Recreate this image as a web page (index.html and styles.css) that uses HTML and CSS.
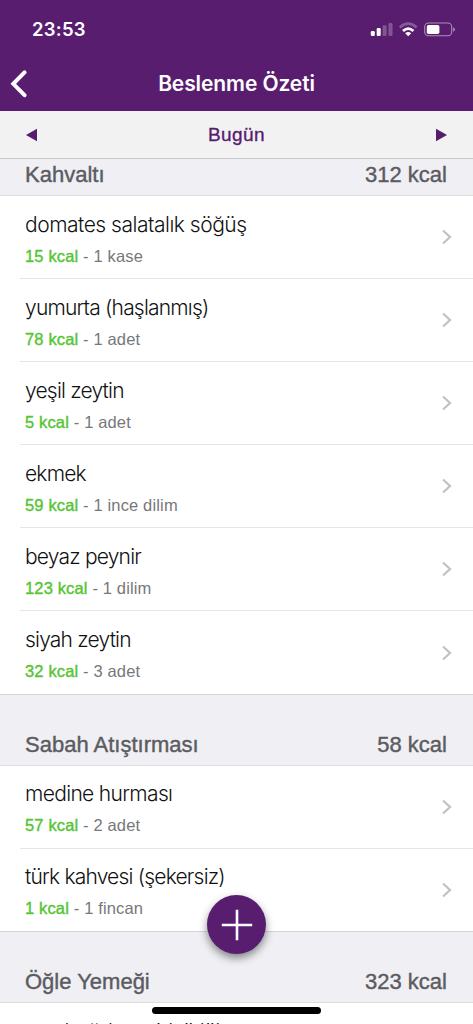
FILE: index.html
```html
<!DOCTYPE html>
<html lang="tr">
<head>
<meta charset="utf-8">
<title>Beslenme Özeti</title>
<link rel="stylesheet" href="styles.css">
</head>
<body>
<svg class="defs"><symbol id="chev" viewBox="0 0 12 16"><path d="M2 1.5 9 8 2 14.5" fill="none" stroke="#c3c3c7" stroke-width="2.3"/></symbol></svg>
<div class="screen">
  <header class="top">
    <div class="status">
      <span class="time">23:53</span>
      <svg class="indicators" width="86" height="16" viewBox="0 0 86 16">
        <g fill="#fff"><rect x=".8" y="9" width="4" height="5" rx="1.2"/><rect x="6.7" y="6" width="4" height="8" rx="1.2"/></g>
        <g fill="#fff" opacity=".25"><rect x="12.6" y="3.3" width="4" height="10.7" rx="1.2"/><rect x="18.5" y="1" width="4" height="13" rx="1.2"/></g>
        <g fill="none" stroke="#fff" stroke-width="2.7"><path d="M29.8 5.4Q38.2-2 46.6 5.4" opacity=".28"/><path d="M33 9Q38.2 4.3 43.4 9"/></g>
        <path d="M35.2 11.2Q38.2 8.9 41.2 11.2L38.2 14.2Z" fill="#fff"/>
        <rect x="54.7" y="1" width="27" height="12.8" rx="3.8" fill="none" stroke="#fff" stroke-opacity=".5" stroke-width="1.1"/>
        <rect x="56.8" y="3" width="12.6" height="9" rx="1.8" fill="#fff"/>
        <path d="M83.2 5.2Q85 6 85 7.5T83.2 9.8Z" fill="#fff" opacity=".5"/>
      </svg>
    </div>
    <div class="nav">
      <svg class="back" width="18" height="28" viewBox="0 0 18 28"><path d="M14.5 2.4 3.3 13.8 14.5 25.2" fill="none" stroke="#fff" stroke-width="4" stroke-linecap="round" stroke-linejoin="miter"/></svg>
      <h1 class="title">Beslenme Özeti</h1>
      <span></span>
    </div>
  </header>
  <nav class="days">
    <svg width="12" height="14" viewBox="0 0 12 14"><path d="M0 7 11 .8V13.2Z" fill="#571c6e"/></svg>
    <span class="day">Bugün</span>
    <svg width="12" height="14" viewBox="0 0 12 14"><path d="M12 7 1 .8V13.2Z" fill="#571c6e"/></svg>
  </nav>
  <main>
    <section>
      <h2 class="meal first"><span>Kahvaltı</span><span>312 kcal</span></h2>
      <ul class="foods">
        <li><div><p class="name wide">domates salatalık söğüş</p><p class="info"><b>15 kcal</b> - 1 kase</p></div><svg class="chev"><use href="#chev"/></svg></li>
        <li><div><p class="name">yumurta (haşlanmış)</p><p class="info"><b>78 kcal</b> - 1 adet</p></div><svg class="chev"><use href="#chev"/></svg></li>
        <li><div><p class="name">yeşil zeytin</p><p class="info"><b>5 kcal</b> - 1 adet</p></div><svg class="chev"><use href="#chev"/></svg></li>
        <li><div><p class="name">ekmek</p><p class="info"><b>59 kcal</b> - 1 ince dilim</p></div><svg class="chev"><use href="#chev"/></svg></li>
        <li><div><p class="name">beyaz peynir</p><p class="info"><b>123 kcal</b> - 1 dilim</p></div><svg class="chev"><use href="#chev"/></svg></li>
        <li><div><p class="name">siyah zeytin</p><p class="info"><b>32 kcal</b> - 3 adet</p></div><svg class="chev"><use href="#chev"/></svg></li>
      </ul>
    </section>
    <section>
      <h2 class="meal"><span>Sabah Atıştırması</span><span>58 kcal</span></h2>
      <ul class="foods short">
        <li><div><p class="name mid">medine hurması</p><p class="info"><b>57 kcal</b> - 2 adet</p></div><svg class="chev"><use href="#chev"/></svg></li>
        <li><div><p class="name">türk kahvesi (şekersiz)</p><p class="info"><b>1 kcal</b> - 1 fincan</p></div><svg class="chev"><use href="#chev"/></svg></li>
      </ul>
    </section>
    <section>
      <h2 class="meal"><span>Öğle Yemeği</span><span>323 kcal</span></h2>
      <ul class="foods next">
        <li><div><p class="name mid">tam buğday eti (sütlü)</p></div></li>
      </ul>
    </section>
  </main>
  <button class="add" aria-label="Ekle"><svg width="32" height="32" viewBox="0 0 32 32"><path d="M16 .8V31.2M.8 16H31.2" stroke="#fff" stroke-width="2.6"/></svg></button>
  <div class="home"></div>
</div>
</body>
</html>
```
FILE: styles.css
```css
* { box-sizing: border-box; margin: 0; padding: 0; }
html, body { height: 1024px; overflow: hidden; }
body { font-family: "Liberation Sans", Arial, sans-serif; background: #fff; }
.defs { display: none; }
.screen { position: relative; height: 1024px; overflow: hidden; }
.top { height: 111px; background: #591d6f; color: #fff; font-family: Inter, sans-serif; }
.status { height: 56px; display: flex; justify-content: space-between; align-items: center; padding: 2px 17px 0 32px; }
.time { font-size: 18.5px; font-weight: 600; letter-spacing: .25px; }
.indicators { margin-top: 1px; }
.nav { height: 55px; display: grid; grid-template-columns: 60px 1fr 60px; align-items: center; }
.back { margin-left: 10px; }
.title { font-size: 21px; font-weight: 600; text-align: center; letter-spacing: -.1px; }
.days { height: 48px; display: flex; justify-content: space-between; align-items: center; padding: 0 26px; background: #f2f2f2; border-bottom: 1px solid #c8c7cc; }
.day { padding-top: 1px; color: #571c6e; font-size: 19px; letter-spacing: .4px; -webkit-text-stroke: .35px #571c6e; }
.meal { display: flex; justify-content: space-between; align-items: flex-end; height: 71.6px; padding: 0 26px 7px 25px; background: #efeff4; border-top: 1px solid #d5d5d8; border-bottom: 1px solid #dedee1; color: #5b5b60; font-size: 22px; line-height: 26px; font-weight: 400; -webkit-text-stroke: .4px #5b5b60; }
.meal.first { height: 37px; border-top: 0; }
.foods { list-style: none; }
.foods li { height: 83.06px; display: flex; justify-content: space-between; align-items: center; margin-left: 20px; padding: 0 20px 0 5px; border-bottom: 1px solid #e5e5e7; }
.foods li > div { padding-top: 3px; }
.foods.short li { height: 82.7px; }
.foods.short li > div { padding-top: 3px; }
.foods li:last-child { border-bottom: 0; }
.foods.next li { align-items: flex-start; }
.foods.next li > div { padding-top: 15px; }
.name { font-family: Inter, sans-serif; font-weight: 300; font-size: 21px; line-height: 28px; letter-spacing: -.8px; color: #111; }
.name.wide { letter-spacing: -.48px; }
.name.mid { letter-spacing: -.66px; }
.info { margin-top: 6px; font-size: 16.5px; line-height: 22px; letter-spacing: .15px; color: #77777a; }
.info b { font-weight: 400; color: #55c535; -webkit-text-stroke: .4px #55c535; }
.chev { width: 12px; height: 16px; }
.add { position: absolute; left: 207px; top: 895px; width: 59px; height: 59px; border: 0; border-radius: 50%; background: #591d6f; display: grid; place-items: center; box-shadow: 0 4px 9px rgba(0,0,0,.45); }
.home { position: absolute; left: 152px; top: 1007px; width: 169px; height: 7px; border-radius: 4px; background: #000; }
```
